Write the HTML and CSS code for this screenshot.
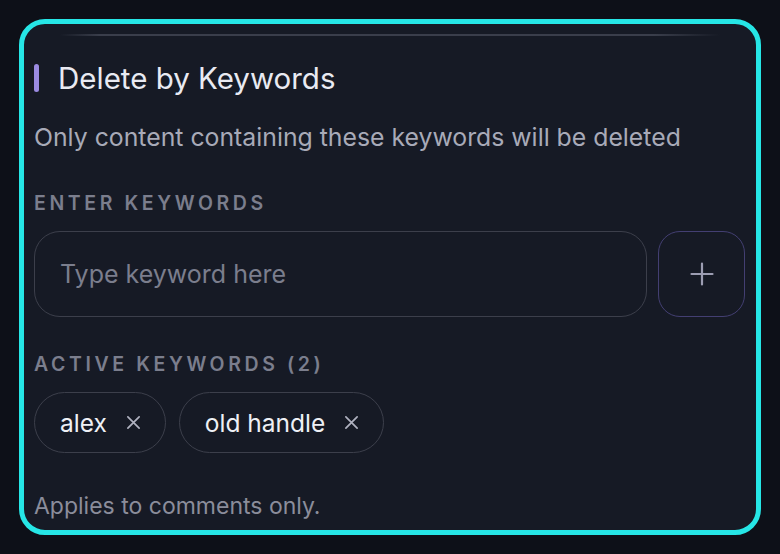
FILE: index.html
```html
<!DOCTYPE html>
<html lang="en">
<head>
    <meta charset="UTF-8">
    <meta name="viewport" content="width=device-width, initial-scale=1.0">
    <title>Delete by Keywords</title>
    <link rel="stylesheet" href="styles.css">
</head>
<body>
    <div class="card">
        <div class="divider"></div>

        <div class="section-title">
            <span class="title-bar"></span>
            <h2>Delete by Keywords</h2>
        </div>
        <p class="subtitle">Only content containing these keywords will be deleted</p>

        <div class="label">Enter Keywords</div>
        <div class="input-row">
            <input type="text" class="keyword-input" placeholder="Type keyword here">
            <button class="add-btn" aria-label="Add keyword">
                <svg width="24" height="24" viewBox="0 0 24 24" fill="none" stroke="currentColor" stroke-width="2.2" stroke-linecap="round">
                    <path d="M12 1.5v21M1.5 12h21"/>
                </svg>
            </button>
        </div>

        <div class="label label-active">Active Keywords (2)</div>
        <div class="chips">
            <span class="chip">alex
                <svg class="chip-x" width="15" height="15" viewBox="0 0 16 16" fill="none" stroke="currentColor" stroke-width="1.8" stroke-linecap="round">
                    <path d="M2 2l12 12M14 2L2 14"/>
                </svg>
            </span>
            <span class="chip">old handle
                <svg class="chip-x" width="15" height="15" viewBox="0 0 16 16" fill="none" stroke="currentColor" stroke-width="1.8" stroke-linecap="round">
                    <path d="M2 2l12 12M14 2L2 14"/>
                </svg>
            </span>
        </div>

        <p class="note">Applies to comments only.</p>
    </div>
</body>
</html>
```

FILE: styles.css
```css
body {
    margin: 0;
    padding: 19px;
    background-color: #0d1018;
    font-family: Inter, "Noto Sans", sans-serif;
}
.card {
    height: 516px;
    box-sizing: border-box;
    border: 5px solid #26e6e6;
    border-radius: 26px;
    background-color: #161a25;
    padding: 10px 11px 10px 10px;
}
.divider {
    height: 2px;
    margin: 0 25px 0 26px;
    background: linear-gradient(to right, rgba(58, 62, 75, 0), #3a3e4b 6%, #3a3e4b 90%, rgba(58, 62, 75, 0));
}
.section-title {
    display: flex;
    align-items: center;
    margin-top: 25px;
}
.title-bar {
    width: 5px;
    height: 28px;
    border-radius: 3px;
    background-color: #9b8be2;
    margin-right: 19px;
}
.section-title h2 {
    margin: 0;
    font-size: 29.5px;
    line-height: 34px;
    font-weight: 400;
    color: #e9eaf2;
}
.subtitle {
    margin: 28px 0 0;
    font-size: 24.8px;
    line-height: 28px;
    color: #a8aab8;
}
.label {
    margin-top: 41px;
    font-size: 19.5px;
    line-height: 22px;
    font-weight: 600;
    letter-spacing: 3.6px;
    text-transform: uppercase;
    color: #7b7e8d;
}
.label-active {
    margin-top: 36px;
}
.input-row {
    display: flex;
    gap: 11px;
    margin-top: 17px;
}
.keyword-input {
    flex: 1;
    height: 86px;
    box-sizing: border-box;
    border: 1.5px solid #3c3f4b;
    border-radius: 26px;
    background: transparent;
    padding: 0 25px;
    font-family: inherit;
    font-size: 25px;
    color: #e9eaf2;
    outline: none;
}
.keyword-input::placeholder {
    color: #7b7e8d;
}
.add-btn {
    width: 87px;
    height: 86px;
    box-sizing: border-box;
    border: 1.5px solid #433f72;
    border-radius: 22px;
    background: transparent;
    color: #9c9db2;
    display: flex;
    align-items: center;
    justify-content: center;
    padding: 0;
    cursor: pointer;
}
.chips {
    display: flex;
    gap: 13px;
    margin-top: 17px;
}
.chip {
    display: flex;
    align-items: center;
    gap: 19px;
    height: 61px;
    box-sizing: border-box;
    padding: 0 24px 0 25px;
    border: 1.5px solid #3c3f4b;
    border-radius: 31px;
    font-size: 24.5px;
    color: #eef0f5;
}
.chip-x {
    color: #b0b2c0;
}
.note {
    margin: 40px 0 0;
    font-size: 23px;
    line-height: 26px;
    color: #8b8d9b;
}
```
